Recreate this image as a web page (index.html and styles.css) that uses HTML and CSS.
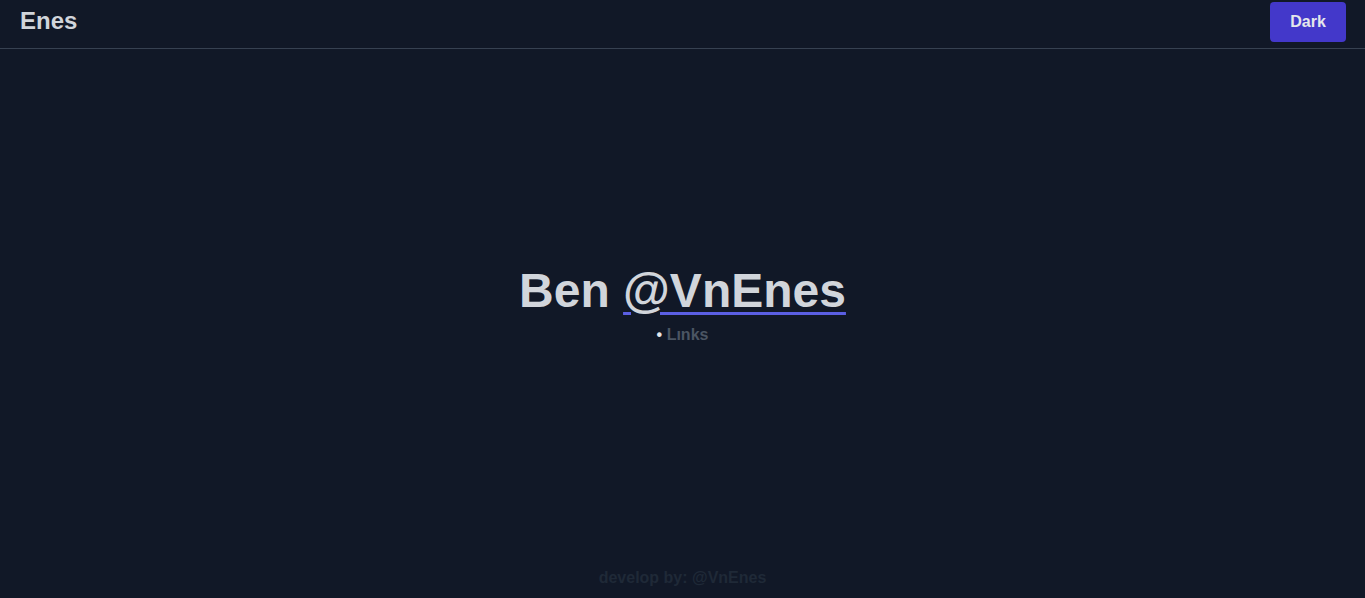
FILE: index.html
```html
<!DOCTYPE html>
<html lang="tr">
<head>
<meta charset="utf-8">
<title>Enes</title>
<link rel="stylesheet" href="styles.css">
</head>
<body>
<div class="page">
  <header class="topbar">
    <div class="brand">Enes</div>
    <button class="theme-btn" type="button">Dark</button>
  </header>
  <main class="hero">
    <h1 class="hero-title">Ben <a class="handle" href="#">@VnEnes</a></h1>
    <ul class="links">
      <li><span class="dot">•</span> Lınks</li>
    </ul>
  </main>
  <footer class="footer">develop by: @VnEnes</footer>
</div>
</body>
</html>
```

FILE: styles.css
```css
html, body {
  margin: 0;
  padding: 0;
  background: #111827;
}
body {
  font-family: "Liberation Sans", Arial, sans-serif;
  color: #d1d5db;
}
.page {
  height: 100vh;
  display: flex;
  flex-direction: column;
}
.topbar {
  height: 48px;
  border-bottom: 1px solid #374151;
  display: flex;
  justify-content: space-between;
  align-items: flex-start;
  padding: 0 19px 0 20px;
  flex-shrink: 0;
}
.brand {
  font-size: 24px;
  line-height: 32px;
  font-weight: 700;
  margin-top: 5px;
  color: #d1d5db;
}
.theme-btn {
  margin-top: 2px;
  height: 40px;
  width: 76px;
  border: none;
  border-radius: 4px;
  background: #4338ca;
  color: #e5e7eb;
  font-family: "Liberation Sans", Arial, sans-serif;
  font-size: 16px;
  font-weight: 700;
  padding: 0;
  cursor: pointer;
}
.hero {
  flex: 1;
  display: flex;
  flex-direction: column;
  align-items: center;
  justify-content: center;
  padding-bottom: 2px;
}
.hero-title {
  margin: 0;
  font-size: 48px;
  line-height: 48px;
  font-weight: 700;
  color: #d1d5db;
}
.handle {
  color: #d1d5db;
  text-decoration: underline;
  text-decoration-color: #5b5fe3;
  text-decoration-thickness: 3px;
  text-underline-offset: 5px;
  text-decoration-skip-ink: auto;
}
.links {
  list-style: none;
  margin: 8px 0 0;
  padding: 0;
  font-size: 16px;
  line-height: 24px;
  font-weight: 700;
  color: #4b5563;
}
.dot {
  color: #e5e7eb;
}
.footer {
  text-align: center;
  font-size: 16px;
  line-height: 24px;
  font-weight: 700;
  color: #1f2937;
  padding-bottom: 8px;
  flex-shrink: 0;
}
```
